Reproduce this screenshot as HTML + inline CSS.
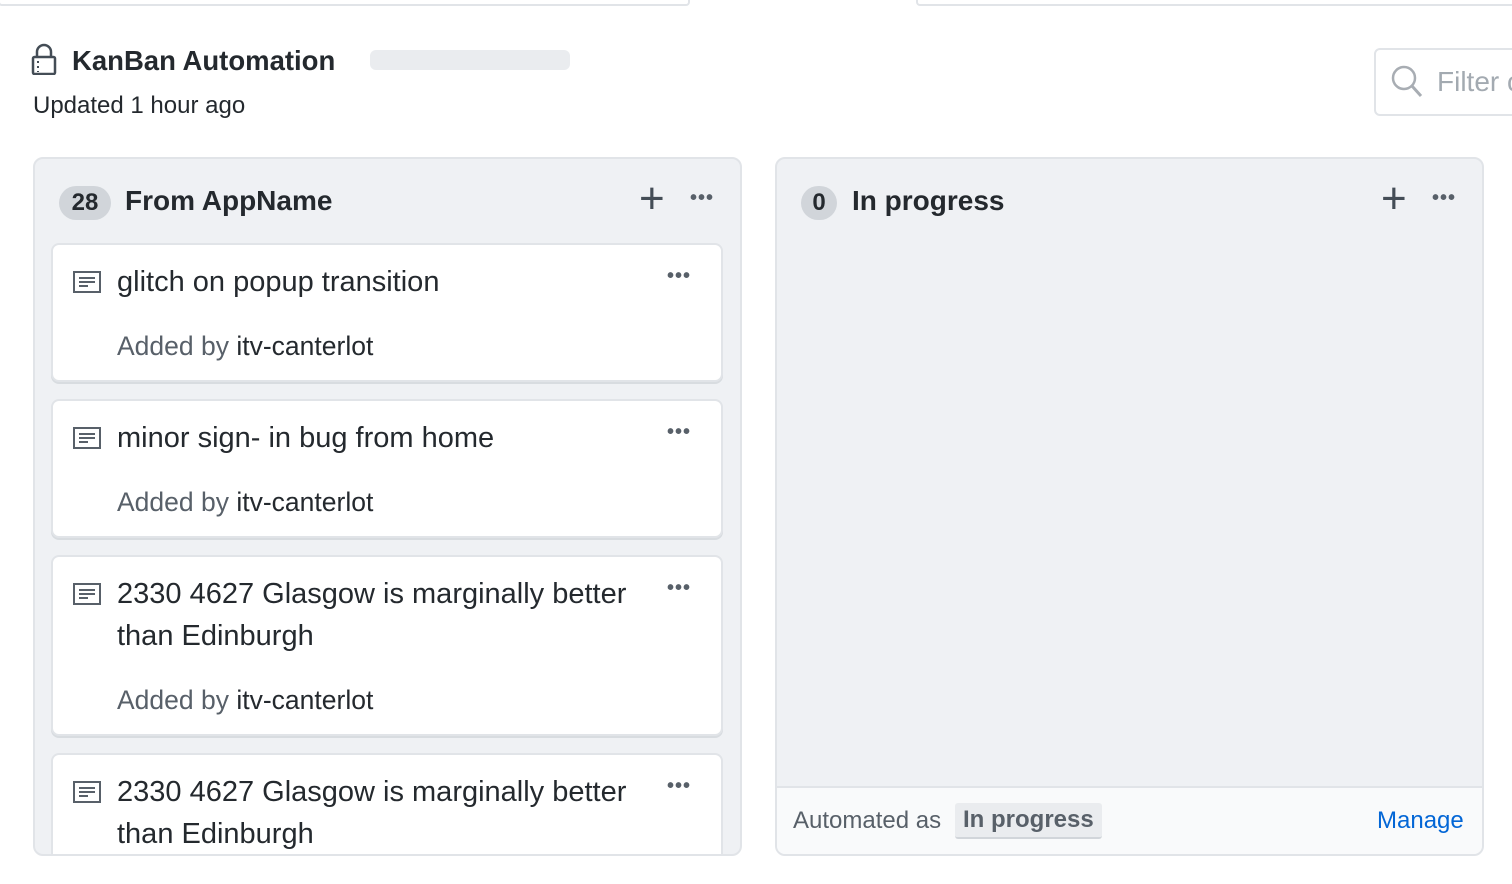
<!DOCTYPE html>
<html><head><style>
*{box-sizing:border-box;margin:0;padding:0}
body{width:1512px;height:884px;overflow:hidden;background:#fff;font-family:"Liberation Sans",sans-serif;color:#24292e;position:relative}
.abs{position:absolute;white-space:nowrap}
.col{position:absolute;top:157px;height:699px;width:709px;background:#eff1f4;border:2px solid #e1e4e8;border-radius:10px;overflow:hidden}
.cnt{position:absolute;top:27px;height:34px;border-radius:17px;background:#d1d5da;font-size:24px;font-weight:bold;line-height:34px;text-align:center}
.ctitle{position:absolute;top:26px;font-size:28px;font-weight:bold}
.plus{position:absolute;top:18px;font-size:44px;color:#444d56;line-height:44px}
.dots{position:absolute;font-size:20px;color:#586069;letter-spacing:1px;font-weight:bold}
.card{position:absolute;left:16px;width:672px;background:#fff;border:2px solid #e1e4e8;border-radius:8px;box-shadow:0 2px 0 #d8dce0}
.card .t{position:absolute;left:64px;top:16px;font-size:29px;line-height:42px;width:560px}
.card .a{position:absolute;left:64px;font-size:26.5px;color:#586069}
.card .a b{font-weight:normal;color:#24292e}
.card svg{position:absolute;left:20px;top:26px}
.card .dots{right:30px;top:20px}
</style></head><body>
<div class="abs" style="left:-2px;top:-4px;width:692px;height:10px;border:2px solid #e1e4e8;border-radius:4px"></div>
<div class="abs" style="left:916px;top:-4px;width:610px;height:10px;border:2px solid #e1e4e8;border-radius:4px"></div>
<svg class="abs" style="left:31px;top:43px" width="26" height="32" viewBox="0 0 26 32"><path d="M6 14V9a7 7 0 0 1 14 0v5" fill="none" stroke="#444d56" stroke-width="2.5"/><rect x="2" y="14" width="22" height="17" rx="1.5" fill="none" stroke="#444d56" stroke-width="2.5"/><path d="M7 18v2M7 23v2M7 28v1" stroke="#444d56" stroke-width="2"/></svg>
<div class="abs" style="left:72px;top:45px;font-size:27.5px;font-weight:bold">KanBan Automation</div>
<div class="abs" style="left:370px;top:50px;width:200px;height:20px;background:#eaecef;border-radius:6px"></div>
<div class="abs" style="left:33px;top:92px;font-size:24px">Updated 1 hour ago</div>
<div class="abs" style="left:1374px;top:48px;width:160px;height:68px;border:2px solid #e1e4e8;border-radius:6px"></div>
<svg class="abs" style="left:1390px;top:64px" width="34" height="34" viewBox="0 0 34 34"><circle cx="14" cy="14" r="11" fill="none" stroke="#a8adb3" stroke-width="2.5"/><path d="M22 22l9 10" stroke="#a8adb3" stroke-width="3"/></svg>
<div class="abs" style="left:1437px;top:66px;font-size:28px;color:#a3aab1">Filter c</div>

<div class="col" style="left:33px">
 <div class="cnt" style="left:24px;width:52px">28</div>
 <div class="ctitle" style="left:90px">From AppName</div>
 <div class="plus" style="left:604px">+</div>
 <div class="dots" style="left:655px;top:28px">•••</div>
 <div class="card" style="top:84px;height:139px">
  <svg width="30" height="24" viewBox="0 0 30 24"><rect x="1" y="1" width="26" height="20" fill="none" stroke="#586069" stroke-width="2"/><path d="M6 7h16M6 11h16M6 15h9" stroke="#586069" stroke-width="2"/></svg>
  <div class="t">glitch on popup transition</div><div class="dots">•••</div>
  <div class="a" style="top:86px">Added by <b>itv-canterlot</b></div></div>
 <div class="card" style="top:240px;height:139px">
  <svg width="30" height="24" viewBox="0 0 30 24"><rect x="1" y="1" width="26" height="20" fill="none" stroke="#586069" stroke-width="2"/><path d="M6 7h16M6 11h16M6 15h9" stroke="#586069" stroke-width="2"/></svg>
  <div class="t">minor sign- in bug from home</div><div class="dots">•••</div>
  <div class="a" style="top:86px">Added by <b>itv-canterlot</b></div></div>
 <div class="card" style="top:396px;height:181px">
  <svg width="30" height="24" viewBox="0 0 30 24"><rect x="1" y="1" width="26" height="20" fill="none" stroke="#586069" stroke-width="2"/><path d="M6 7h16M6 11h16M6 15h9" stroke="#586069" stroke-width="2"/></svg>
  <div class="t">2330 4627 Glasgow is marginally better than Edinburgh</div><div class="dots">•••</div>
  <div class="a" style="top:128px">Added by <b>itv-canterlot</b></div></div>
 <div class="card" style="top:594px;height:181px">
  <svg width="30" height="24" viewBox="0 0 30 24"><rect x="1" y="1" width="26" height="20" fill="none" stroke="#586069" stroke-width="2"/><path d="M6 7h16M6 11h16M6 15h9" stroke="#586069" stroke-width="2"/></svg>
  <div class="t">2330 4627 Glasgow is marginally better than Edinburgh</div><div class="dots">•••</div></div>
</div>

<div class="col" style="left:775px">
 <div class="cnt" style="left:24px;width:36px">0</div>
 <div class="ctitle" style="left:75px">In progress</div>
 <div class="plus" style="left:604px">+</div>
 <div class="dots" style="left:655px;top:28px">•••</div>
 <div class="abs" style="left:0;top:627px;width:709px;height:72px;background:#f9fafb;border-top:2px solid #e1e4e8"></div>
 <div class="abs" style="left:16px;top:648px;font-size:24px;color:#586069">Automated as</div>
 <div class="abs" style="left:178px;top:644px;padding:0 8px;height:36px;line-height:34px;background:#eaecef;border-bottom:2px solid #d1d5da;border-radius:3px;font-size:24px;font-weight:bold;color:#586069">In progress</div>
 <div class="abs" style="left:600px;top:648px;font-size:24px;color:#0366d6">Manage</div>
</div>
</body></html>
